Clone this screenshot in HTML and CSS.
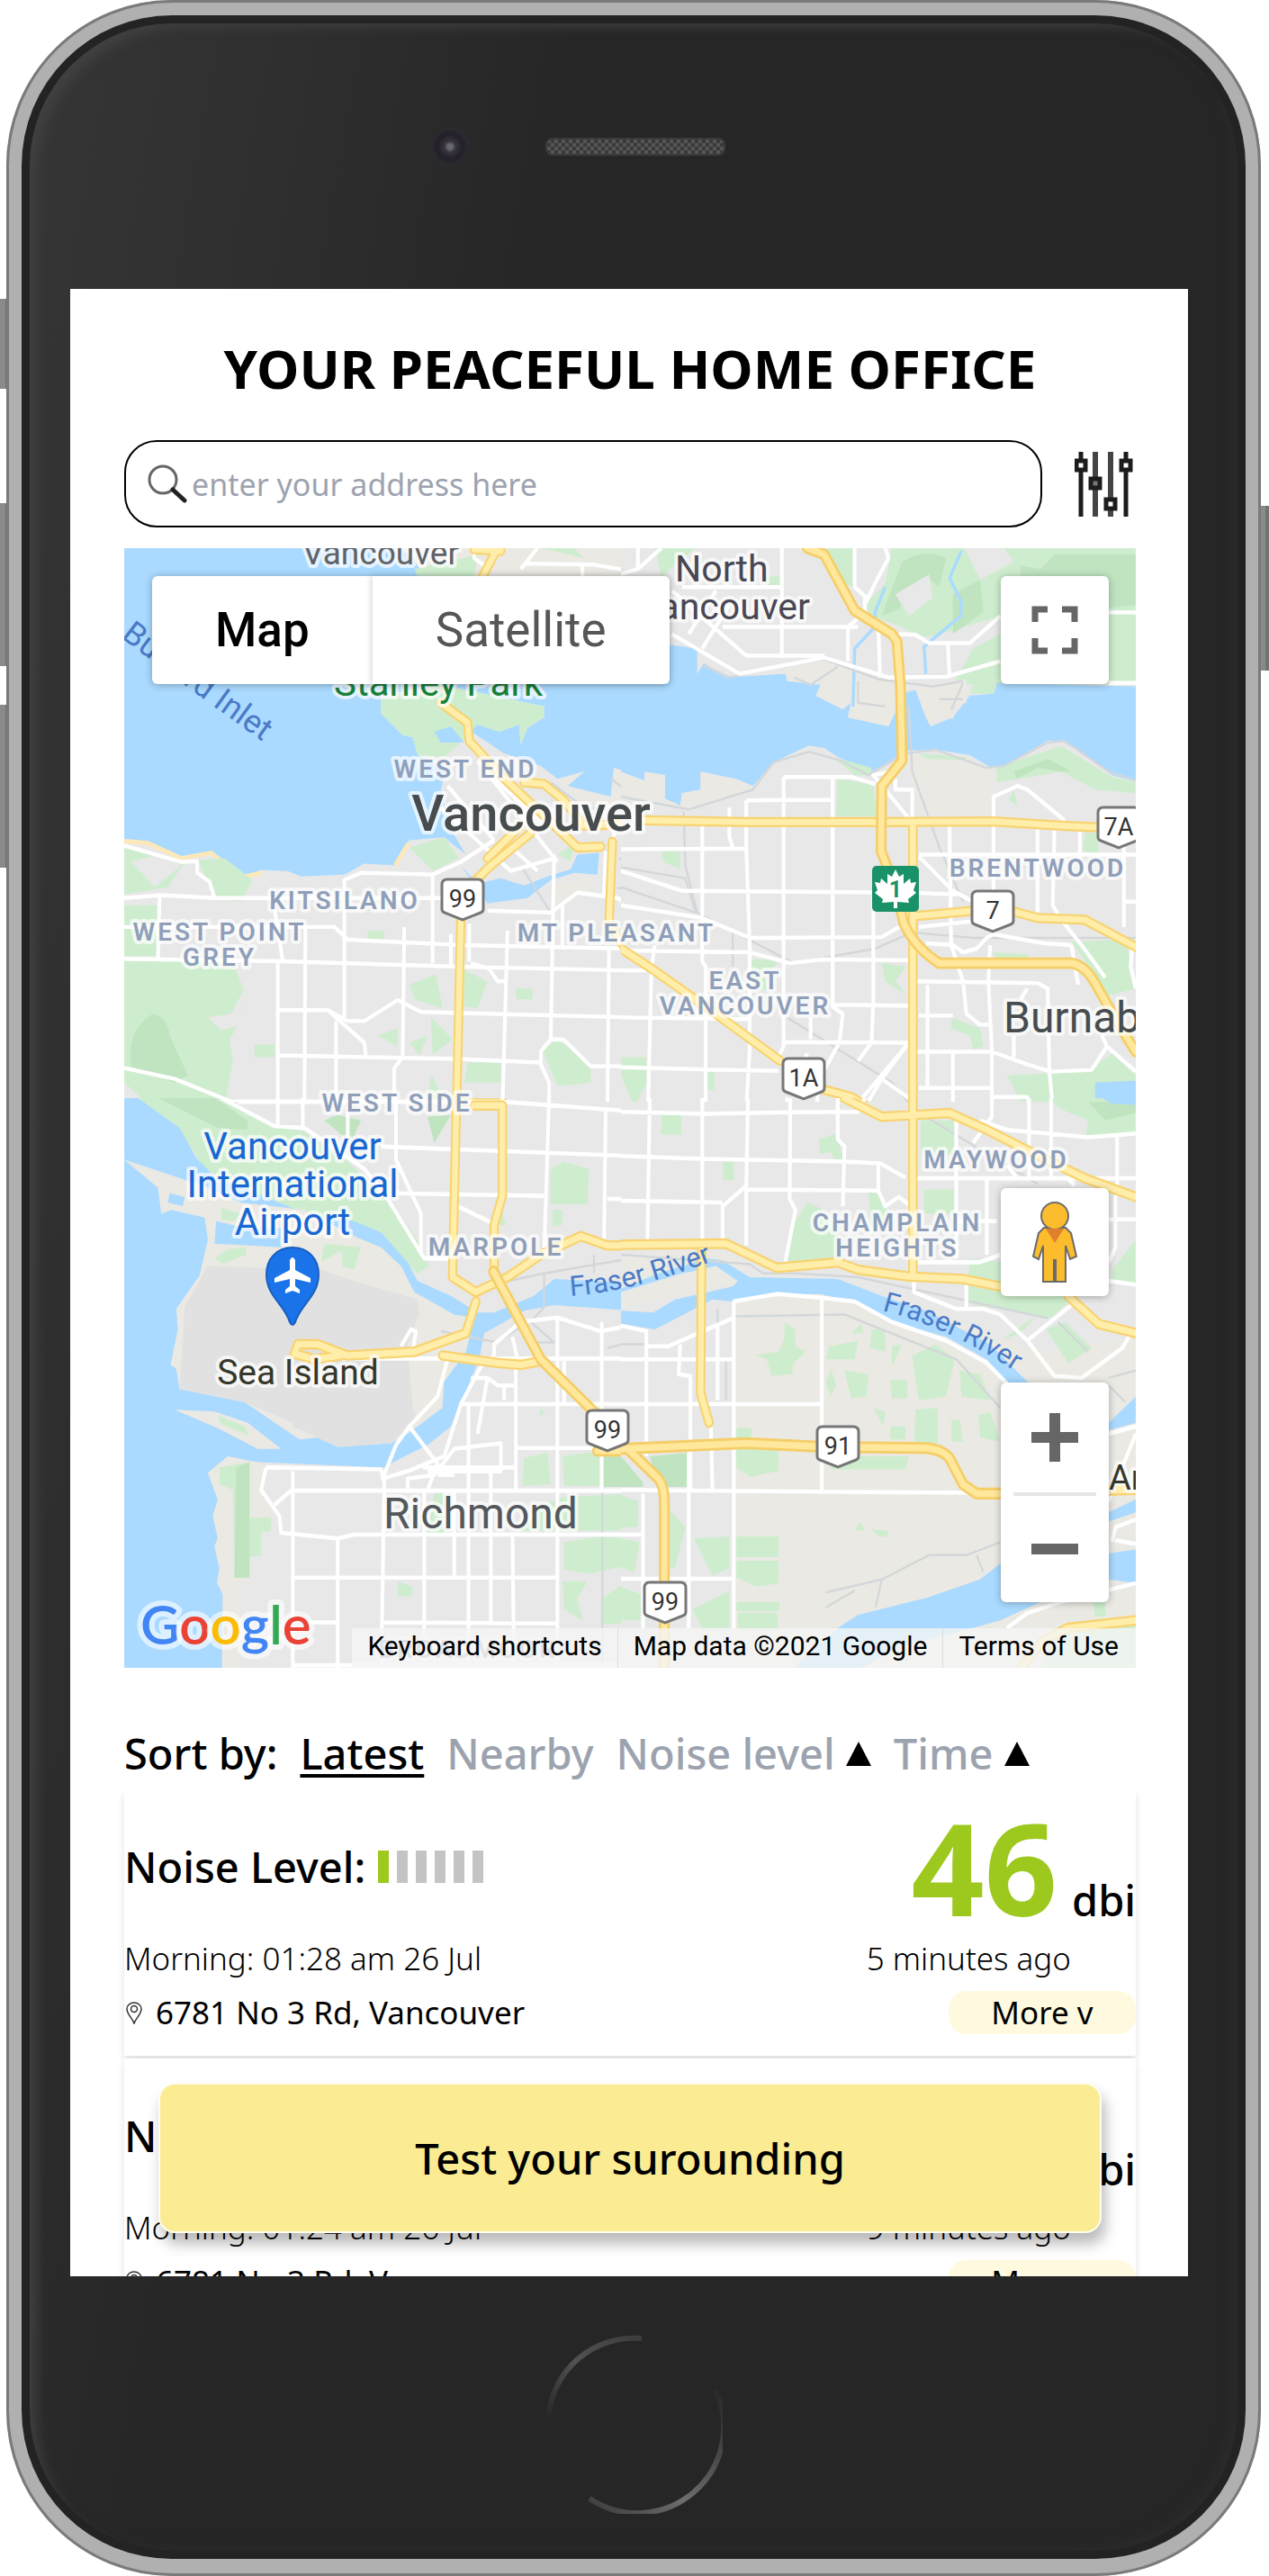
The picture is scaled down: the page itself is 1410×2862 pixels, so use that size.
FILE: index.html
```html
<!DOCTYPE html>
<html lang="en">
<head>
<meta charset="utf-8">
<meta name="viewport" content="width=device-width, initial-scale=1">
<title>Your Peaceful Home Office</title>
<link rel="stylesheet" href="styles.css">
</head>
<body>
<div class="stage">
  <i class="key key-mute"></i><i class="key key-up"></i><i class="key key-down"></i><i class="key key-power"></i>
  <div class="device">
    <div class="bezel bezel-top">
      <span class="camera"></span><span class="speaker"></span>
    </div>
    <main class="screen">
      <h1 class="title">YOUR PEACEFUL HOME OFFICE</h1>
      <form class="search">
        <label class="search-box">
          <svg class="search-icon" viewBox="0 0 44 44" aria-hidden="true"><circle cx="17" cy="17" r="15" fill="none" stroke="#666" stroke-width="3"/><path d="M28 28L41 40" stroke="#222" stroke-width="5" stroke-linecap="round"/></svg>
          <input class="search-input" type="text" placeholder="enter your address here" aria-label="Address">
        </label>
        <button class="filter" type="button" aria-label="Filters">
          <svg viewBox="0 0 66 72" width="66" height="72"><g stroke="#1c1c1c" stroke-width="5" fill="#fff"><path d="M7 0V72M57 0V72"/><path d="M23 0V72M40 0V72" stroke="#444" stroke-width="6"/><rect x="2" y="10" width="10" height="10"/><rect x="18" y="30" width="10" height="10" fill="#777"/><rect x="35" y="53" width="10" height="10"/><rect x="52" y="10" width="10" height="10"/></g></svg>
        </button>
      </form>

      <section class="map" aria-label="Map of Vancouver">
        <svg class="map-canvas" viewBox="138 609 1124 1244">
          <rect x="138" y="609" width="1124" height="1244" fill="#e8e8e8"/>
          <!-- north-west tile -->
          <svg x="120" y="600" width="580" height="630" viewBox="0 0 1568 1568" preserveAspectRatio="none">
            <path class="water" d="M0 0H1568V1000H0Z"/>
            <path class="land" d="M49 832L120 835 220 880 310 862 400 930 460 912 540 915 580 930 710 925 770 895 860 900 905 830 1010 822 1075 870 1030 800 1000 690 1015 630 930 595 915 545 885 540 820 480V430L1000 400 1310 460V490L1260 520 1240 565 1235 510 1175 530 1110 510 1075 520 1190 590 1300 625 1350 660 1430 640 1380 680 1510 710 1520 630 1568 645V1568H49Z"/>
            <path class="sand-edge" d="M49 832L120 838 220 880 310 865 400 932 460 922M862 900L903 838"/>
            <path class="park" d="M820 440L1000 400 1310 460V490L1260 520 1240 565 1235 510 1175 530 1110 510 1060 560 1010 600 930 595 915 545 885 540 820 480ZM905 850L1010 822 1055 880 975 915ZM270 885L350 880 435 940 400 1000 320 990ZM49 850L230 890 180 960 49 980ZM49 1010H150V1150H49ZM49 1165H375L410 1250V1310L365 1380 375 1440 350 1568H130L49 1500Z"/>
            <path class="park" d="M905 1230L985 1200 1005 1295 920 1270ZM1070 1190L1140 1220 1110 1295 1070 1290ZM1305 1410L1350 1380 1450 1450V1500L1350 1510ZM1225 1240H1275V1270H1225ZM970 1320L1035 1380 975 1425ZM780 1080H830V1108H780ZM810 1370L870 1350V1400ZM905 1390L960 1370 935 1425ZM1080 1445H1180V1500H1070ZM440 1395H500V1430H440ZM970 1475L1020 1568H960ZM1350 870L1400 840 1390 890Z"/>
            <path class="forest" d="M68 1400Q80 1340 135 1310 180 1320 185 1370L240 1480 200 1500 68 1455Z"/>
            <path class="gray" d="M70 890L150 870 220 900 140 960ZM300 1320L370 1310 410 1240V1340L340 1355Z"/>
            <path class="water" d="M1060 900L1110 950 1180 935 1250 955 1320 930 1390 910 1410 870 1475 865 1470 925 1400 920 1330 940 1260 990 1140 1005ZM980 530L1030 515 1070 560 1000 560Z"/>
            <path class="shore" d="M880 22H1568V100H960ZM1350 665L1430 640 1380 680 1510 710 1520 630 1568 645V740H1450ZM1350 950L1470 930 1430 980 1340 1000Z"/>
            <path class="park" d="M920 80L1020 60 1110 40 1100 100H930ZM1300 22H1400L1430 50Z"/>
            <path class="rail" d="M1330 670L1430 740 1568 750M1510 660L1568 700M1240 900L1330 1030M1535 880L1568 900M1530 960L1568 975"/>
            <path class="road" d="M49 845L220 890 268 888V920L305 945 320 990M49 990L160 982 320 990H1000M155 985L150 1160M49 1070H680L720 1105 1060 1120 1568 1130M49 1158L520 1165 1060 1180 1568 1190M710 1320V940L760 920 975 925 1060 890 1160 830M975 925V1170M890 1070L885 1430 860 1460V1568M593 1065L590 1568M510 1165V1568M500 1020L525 1165M510 1300H660L770 1390 775 1430M660 1300L720 1330H770L870 1272 940 1305 1060 1308 1568 1320M685 1330V1568M510 1425L775 1430 1050 1435 1300 1445M1200 1080L1185 1568M1340 870L1330 1380 1300 1415V1450L1325 1500V1568M1330 1380L1370 1382 1450 1455H1568M1505 1130L1500 1568M1090 1170L1145 1185 1170 1220H1190M1140 1025L1330 1030 1410 975 1530 990 1568 1010M1365 1010V1130M1030 1090V1180M1085 1060V1165M49 1460L200 1490 410 1568M350 1553H1100M1495 860L1490 980M1520 820V740M1240 80L1290 22M1250 65L1460 68 1568 85M1425 68V100M1100 22V50L1130 70"/>
            <path class="road" d="M1020 680L1160 830M1000 740L1210 915 1340 880M1110 610L1350 890M1160 660L1300 780M1200 840L1290 915"/>
            <path class="hwy-edge" d="M1000 450L1080 505 1085 555 1180 650 1410 850 1480 848M1250 670L1310 675 1370 720 1430 790 1568 785M1270 810L1150 900 1100 945M1240 790L1140 880M1515 835L1505 1060 1568 1150M1060 1040L1047 1568M1047 1558H1190M1160 40L1120 110M1100 26L1180 30"/>
            <path class="hwy" d="M1000 450L1080 505 1085 555 1180 650 1410 850 1480 848M1250 670L1310 675 1370 720 1430 790 1568 785M1270 810L1150 900 1100 945M1240 790L1140 880M1515 835L1505 1060 1568 1150M1060 1040L1047 1568M1047 1558H1190M1160 40L1120 110M1100 26L1180 30"/>
          </svg>
          <!-- north-east tile -->
          <svg x="690" y="600" width="590" height="630" viewBox="0 0 1568 1568" preserveAspectRatio="none">
            <path class="gray" d="M0 0H1568V1568H0Z"/>
            <path class="park" d="M800 22H1568V400H980L1040 300 1120 260 1120 210 940 260 880 270 830 240 740 210 720 180 780 120ZM610 22H690V130L620 110ZM100 22H220L120 100ZM430 100H475V135H420Z"/>
            <path class="forest" d="M830 60Q900 20 960 50L940 130 900 100 820 190 770 210ZM980 150L1060 110 1070 200 980 260ZM1180 70L1240 80 1280 40H1520V180L1420 190 1370 150 1180 190Z"/>
            <path class="gray" d="M1015 22H1130L1160 60 1060 110ZM810 150L910 95 920 160 850 210Z"/>
            <path class="water" d="M0 250L146 290 225 300V370L245 340 310 380 480 370 590 400 575 430 655 468 680 450 670 490 790 515 800 480 845 420 870 415 900 490 915 515 980 490 1030 430 1100 425 1110 395 1520 405V668L1450 650 1380 600 1300 555H1260L1130 625 1090 628 1030 595 930 580 850 582 740 640 640 600 600 575 555 568 450 615 390 680 340 660 235 640V690L180 700 175 735 130 715V650L70 640V665L0 640Z"/>
            <path class="shore" d="M485 355L600 335 680 360 700 390 655 468 575 430 590 400 490 390ZM870 400L1020 385V450L980 460V495L940 480 915 515 900 490ZM690 400L780 380 830 440 790 515 670 490ZM850 590L1020 600 1100 640 1100 760H870ZM0 645L70 665V640L130 650V715L175 735 180 700 235 690V640L390 680 340 715 180 745 0 700Z"/>
            <path class="park" d="M640 660L745 675 755 765 635 765ZM625 600L740 630 735 650 690 650ZM1110 630L1200 600 1300 570 1450 655 1520 670V700L1400 690 1300 640 1110 670ZM1045 390L1110 395 1100 425H1030ZM120 860H175V910L125 890ZM380 1160H460V1175L420 1200 440 1250 390 1230ZM770 1170L840 1180 810 1220 845 1260 780 1220ZM1330 1110L1490 1105 1520 1240 1440 1260 1390 1190ZM880 590L1020 600V610L900 605ZM1370 810H1410V870L1365 860ZM975 1320L1060 1350 1070 1400 1040 1410 1030 1370 975 1350ZM1140 1480L1260 1475 1380 1470 1450 1420 1520 1480V1568H1190ZM250 1465H275V1520H250ZM0 1430H75V1500L40 1568 0 1480ZM1095 1140L1200 1145V1155H1110ZM1160 690L1170 735 1145 720Z"/>
            <path class="forest" d="M1160 640L1260 605 1330 640 1300 640 1230 630 1170 660Z"/>
            <path class="water" d="M1400 1500L1520 1495V1545L1470 1555 1400 1548Z"/>
            <path class="stream" d="M1005 30L970 105 1005 170 1003 210 920 275 895 295 900 370M780 130L750 200V240L690 300 685 460"/>
            <path class="rail" d="M240 345L320 380 520 340 600 330 760 385 920 405 1010 390M510 380L560 400 640 350M850 460L860 640 940 850 1010 1000M450 615L390 690 200 745 0 710M450 615L555 585 650 610 730 650 840 590 930 580 1080 630 1130 625 1260 560 1310 555 1440 640 1520 665M0 905L190 935 220 1030 0 960M185 750L190 900 225 1030 510 1170 750 1130 860 1085 1040 1100H1520M330 1080V1180M490 1320L800 1500 860 1568M700 390V450L780 460M940 440L1010 440M975 470L1010 395"/>
            <path class="road" d="M0 95L50 80 120 22M50 80V22M475 22V320M180 130H475M150 260L350 370 600 325 790 380 960 378 1120 335M370 320L150 140M300 240H700M370 320H600M200 260L280 140M240 300L320 180M690 22V130L720 155V200L670 240V335M720 180L750 120 790 50 780 22M760 240L765 380M820 260L870 262 910 285 1030 285 1120 210M965 285L970 375M1440 200H1520M1440 395H1520M0 855L370 853M370 720V853L380 1120V1410L370 1568M240 780V1165L250 1180V1568M480 655V1400L465 1430M480 655L680 655 750 675M625 655V1290L655 1310 645 1390 580 1500V1568M370 720L620 718M320 740V820L330 850M0 915L180 970 860 975 990 980M0 1010L70 1020 240 1045 380 1100 770 1098 830 1065M0 1135L380 1140 500 1170 590 1160 860 1162M745 980V1280L740 1390 700 1440M630 1285L860 1288M480 1388L850 1390 770 1490 720 1568M0 1320L380 1325M0 1458L300 1465 465 1468M90 1180L80 1568M100 1120L90 1180M0 1190H90M770 1490L860 1550M850 1390L690 1568M550 1420L530 1460M560 1320V1380M810 660V690H860V770M1100 780V710L1170 680 1200 690 1310 775M1100 710V1040M970 790L975 1120M1230 800V1030M1280 800L1275 1010 1300 1050M1355 800V880M880 870H1520M880 875L980 970 1060 1010M880 1070L1080 1050M870 1220L1230 1225 1260 1240 1265 1470 1275 1568M975 1120L1010 1220 1020 1310 1060 1340H1090M900 1115L980 1120 1010 1140 1050 1130 1080 1100 1100 1090 1250 1115 1330 1120M1090 1120L1085 1220 1095 1410V1568M870 1415L1095 1415 1200 1450 1270 1470 1390 1465 1435 1400 1420 1370M1435 1400L1520 1470M905 1230V1510M880 1315H980M880 1515H1090M1095 1540H1200L1205 1568M980 1420V1568M1485 830V1070M1490 1000H1520M1300 1050L1360 1120 1430 1210M1330 1120L1350 1230M1510 1120L1505 1180 1520 1240M1200 1240L1180 1270M1160 1370V1430M490 1540V1568M850 770L745 650 800 640"/>
            <path class="hwy-edge" d="M60 775L380 780 760 780 1100 778 1300 790 1420 795M0 1130L90 1185 280 1310 470 1440M600 1520L680 1540 730 1568M862 780V1568M865 1040L1040 1025M1150 1025L1230 1045 1370 1050 1520 1125"/>
            <path class="hwy" d="M60 775L380 780 760 780 1100 778 1300 790 1420 795M0 1130L90 1185 280 1310 470 1440M600 1520L680 1540 730 1568M862 780V1568M865 1040L1040 1025M1150 1025L1230 1045 1370 1050 1520 1125"/>
            <path class="fwy-edge" d="M550 22L600 40 690 195 800 260 815 280 825 400 830 610 770 680 768 860 810 960 835 1060Q870 1130 940 1170L1330 1170Q1370 1175 1400 1225L1470 1340 1520 1415"/>
            <path class="fwy" d="M550 22L600 40 690 195 800 260 815 280 825 400 830 610 770 680 768 860 810 960 835 1060Q870 1130 940 1170L1330 1170Q1370 1175 1400 1225L1470 1340 1520 1415"/>
          </svg>
          <!-- south-west tile -->
          <svg x="120" y="1220" width="580" height="650" viewBox="0 0 1568 1568" preserveAspectRatio="none">
            <path class="gray" d="M0 10H1568V1568H0Z"/>
            <path class="park" d="M70 0H330L480 70 590 90 720 170 840 270 930 380 965 450 930 470 820 380 700 330 480 280 310 215 210 80Z"/>
            <path class="forest" d="M150 0H320L420 60 420 85 330 80ZM650 60L690 45 760 60 730 120ZM960 50L1030 45 980 120Z"/>
            <path class="water" d="M49 0H90L215 80 265 160 320 210 470 265 600 310 740 330 820 360 900 440 930 490 1030 530 1110 575H1160L1280 530 1340 485 1568 495V570L1500 565 1340 555 1250 570 1130 630 1115 700 1060 820 1030 880 960 930 880 965 830 990 440 975 360 960 300 1005 330 1075 315 1120 330 1180 320 1200 335 1260 328 1300 345 1330 342 1568H49Z"/>
            <path class="shore" d="M49 165L150 195 300 240 400 280 590 300 740 370 820 400 880 450 920 520 1040 580 1100 590 1075 680 1010 760 1005 830 900 900 850 925 690 935 630 910 575 915 410 815 215 780 205 725 188 715 210 620 205 565 275 475 300 380 290 320 190 300 160 310 150 240ZM200 835L320 840 420 870 520 940 450 940 330 885ZM360 960L470 980 455 1050 500 1090 400 1300 395 1568H342L345 1330 328 1300 335 1260 320 1200 330 1180 315 1120 330 1075 300 1005Z"/>
            <path class="water" d="M185 255L230 265 225 290 180 280ZM325 330L400 345 520 350 520 400 320 390ZM49 345L160 310 150 330 49 350Z"/>
            <path class="island" d="M300 450L640 460 740 490 930 540 935 580 900 660 915 830 930 860 850 925 690 935 630 910 555 880 555 870 410 815 215 780 230 560Z"/>
            <path class="park" d="M340 295L400 310 380 330 340 325ZM320 430L360 405 415 400 415 420 345 445ZM650 390L760 400 740 460 705 450 700 410 640 440ZM330 850L410 880 425 905 340 875ZM335 990L425 975V1125H490V1160L460 1165V1225L425 1230V1285H380L375 1050 335 1035ZM1330 190L1370 170 1445 190 1440 285H1330ZM1335 300H1365V340L1335 345ZM1250 965L1320 950 1330 1035 1245 1040ZM1365 960L1480 945V1040H1370ZM1365 1070L1568 1060V1160H1240L1290 1100ZM1370 1190L1480 1175 1568 1180V1250L1450 1275 1370 1265ZM1365 1295H1440L1410 1340 1425 1400 1370 1370ZM870 1295L915 1310V1335H870ZM1485 1340L1568 1290V1410H1480ZM980 1060H1010V1165H960ZM1180 295L1195 340H1170ZM1300 830L1315 850H1295Z"/>
            <path class="forest" d="M1485 950H1568V1042H1485ZM385 990L425 975V1285H380Z"/>
            <path class="rail" d="M1100 510L1310 470 1568 430M1310 470V560L1270 600 1340 655H1270M1000 625L1170 655 1260 600M1460 420V470M1485 1040V1568M1500 670L1568 655"/>
            <path class="road" d="M340 0L500 75 590 80 640 110 770 190 840 270 950 430H1040M390 10H1190L1568 35M510 0V75M585 0V80M720 40V110M865 0V165L940 310V420M820 130L1568 155M860 255L1310 262M1050 290L1155 335M1325 0L1310 420M1495 30L1490 385M1500 270H1568M1185 0V40M475 990L820 995 830 1030 820 1568M475 990L460 1050 515 1120 520 1165 690 1180 740 1170H1568M500 1090L550 1052H1568M555 1000V1568M690 1180V1568M555 1285H1350M555 1520H1568M820 1405L1350 1408M590 1405H690M950 1050L950 1568M1040 1050V1285M1083 820V1568M1150 1000V1408M1215 1170L1220 1568M1350 590V1568M1225 700V1050M1483 600V1050M1225 938H1568M1060 820H1568M700 698H1568M880 665L910 620 925 625 915 680M1020 700L990 800 905 880 865 930 825 1020 900 1000 1010 960 1060 820 1120 720 1160 690M905 880L990 980 960 1050M900 1050V1020L980 1010 1040 940 1180 925V1000H960M1160 690V660L1240 600 1350 588 1480 625 1568 610M1215 640L1230 700M1090 750H1140L1170 770H1220M1190 770V810M1140 750L1110 900M1370 705V820M945 990H1225M990 1010H1040"/>
            <path class="hwy-edge" d="M1047 0L1035 480 1105 520 1200 480 1300 420 1420 370 1500 395H1568M1100 20H1185V260L1160 340V470M1105 545L1075 630 920 680 720 690 630 660H570L560 685 620 700 700 690M1005 690L1170 710 1240 715 1300 705"/>
            <path class="hwy" d="M1047 0L1035 480 1105 520 1200 480 1300 420 1420 370 1500 395H1568M1100 20H1185V260L1160 340V470M1105 545L1075 630 920 680 720 690 630 660H570L560 685 620 700 700 690M1005 690L1170 710 1240 715 1300 705"/>
            <path class="fwy-edge" d="M1158 465L1300 700 1470 850M1470 945H1568"/>
            <path class="fwy" d="M1158 465L1300 700 1470 850M1470 945H1568"/>
          </svg>
          <!-- south-east tile -->
          <svg x="690" y="1220" width="590" height="650" viewBox="0 0 1568 1568" preserveAspectRatio="none">
            <path class="gray" d="M0 10H1568V1568H0Z"/>
            <path class="shore" d="M335 540L600 500 900 560 1140 650 1230 680 1568 640V1568H335ZM0 430L240 400 380 440 340 500 0 560Z"/>
            <path class="park" d="M550 280L600 300 660 400 640 430 490 440 500 350ZM730 250L765 260 790 310 740 370ZM885 60H985V150H885ZM895 245H985V310H895ZM120 45H178V98H118ZM300 170H333V220H302ZM585 110L635 95 660 170 640 180 620 145 585 150ZM1260 0H1520V100L1370 110 1380 60 1300 30ZM1030 430L1130 440V500L1340 530 1270 590 1020 550ZM1450 460L1520 380V500H1450Z"/>
            <path class="park" d="M485 600L515 620V665L545 680 510 710 505 740 445 745 430 700 395 688 465 680 480 650ZM605 700L615 665 700 650 690 700ZM740 620H780V680L735 670ZM680 630L710 605 715 630ZM800 665L830 660 800 720ZM860 690L930 660 985 700 960 800 880 810 870 760ZM605 765L620 725 635 770 620 800ZM660 730L730 740 725 800 680 805ZM795 755H845V805H800ZM1000 730L1060 740 1090 810 1005 800ZM745 830L780 840 775 880ZM870 835L935 830V925L865 920ZM975 865L1000 860 1010 920H975ZM1055 850L1090 840 1120 920 1060 910ZM795 880H840V915H795ZM1255 620L1310 600 1390 670 1320 710ZM340 885H385V935H465V1000L380 1015 340 990ZM620 960H850L840 995H620ZM340 1175H465V1230H340ZM340 1240H465V1300L400 1310 340 1285ZM340 1350H468V1375H340ZM345 1380H460L465 1420H345ZM215 1180L320 1175V1260L270 1280ZM210 1370L320 1320V1420H240ZM0 1065L50 1080V1150H0ZM0 1180L55 1190 40 1270 0 1260ZM120 1080L190 1150 160 1260 115 1250ZM0 1310L60 1330V1400H0ZM690 1160L705 1135 720 1158ZM740 1155L788 1160V1175H760ZM1120 650L1230 580 1180 630Z"/>
            <path class="forest" d="M85 960L200 950V1042H110ZM0 960L65 1030V1042H0ZM1380 10H1520V40L1430 60Z"/>
            <path class="water" d="M0 510L110 470 255 430 300 435 380 480 640 485 770 530 900 570 1090 660 1205 765H1145L1080 700 960 640 800 600 680 545 590 525H460L330 545 270 540 100 620 0 605V570L95 575 160 540 330 505 345 490 280 450 180 470 0 520ZM500 1537L640 1420 700 1385 900 1340 1060 1290 1130 1240 1440 1220 1520 1210V1300L1440 1290 1240 1350 1120 1400 1000 1430 820 1470 690 1537ZM1440 870L1520 800V870L1440 890ZM1440 1110L1520 1075V1110L1440 1135ZM1420 0H1520V18L1450 15Z"/>
            <path class="park" d="M1240 1530L1300 1440 1520 1400V1530ZM1395 1350L1430 1330V1390H1400Z"/>
            <path class="rail" d="M0 420L380 445 420 470 520 470 700 480 1260 590M335 585L660 580 990 700 1120 830M0 660H80M285 565V810M310 700V810M605 1325L770 1290 910 1225 1020 1225 1120 1190M770 1290L752 1365M605 1365L690 1320M1050 1225L1070 1270M900 50L1230 230M1290 600L1380 680M1440 750L1520 730M1440 770L1490 815"/>
            <path class="road" d="M0 37L245 42 500 38 700 37 720 0M85 0L78 385M240 0V385M375 0L370 235 300 290V385M0 155L240 163 655 170 765 175 840 213M500 0L498 270 515 300 485 440M0 275L300 280M370 245L760 248 780 290 820 265 850 285M370 245V395M760 175V245M640 0V110L660 130 655 290M990 60V430M870 215H1520M1080 215V420M990 330H1110M1205 0V215M1270 0V215M1095 0V50L1040 120M1060 60L1140 85 1380 105 1520 95M1465 95V250M1140 180L1170 215M870 440H1060L1120 420M865 480V520L990 565H1070L1120 580 1200 650 1350 540M1020 500V565M1200 650L1280 745 1360 750 1480 670 1500 640M1440 490L1520 500M1460 260V400L1440 440M330 545L460 525 590 535 690 545 800 600 960 650 1080 710 1140 765M593 535V1050M333 545V1420M0 820H590M0 700H330M75 620V960M0 610L75 625M80 665H140L330 590M175 660L170 740 205 745V1050M285 610V810M265 870L270 1050M200 950V1420M0 1050L590 1055 1050 1058M0 1170H65M0 1288H330M65 1420V1060M1440 900L1520 880M1520 900L1440 1080M1450 1190L1460 1150 1520 1130M1520 1195L1460 1185M1140 1420L1200 1380 1300 1350 1520 1300M1320 215L1340 235M1440 325H1520"/>
            <path class="hwy-edge" d="M0 393L310 390 460 455 640 440 700 460 850 478 1010 485 1120 505M1320 530L1410 605 1520 630M862 0V475M660 0L770 50 970 40 1080 85 1200 140 1370 215 1520 265M238 410L235 790 260 870M1120 1060L1520 1050M1180 1530L1240 1460 1320 1420 1520 1400"/>
            <path class="hwy" d="M0 393L310 390 460 455 640 440 700 460 850 478 1010 485 1120 505M1320 530L1410 605 1520 630M862 0V475M660 0L770 50 970 40 1080 85 1200 140 1370 215 1520 265M238 410L235 790 260 870M1120 1060L1520 1050M1180 1530L1240 1460 1320 1420 1520 1400"/>
            <path class="fwy-edge" d="M0 940L370 925 600 935 900 938Q950 942 970 965L1010 1035 1050 1060H1140M20 940L110 1020Q128 1040 128 1080V1568"/>
            <path class="fwy" d="M0 940L370 925 600 935 900 938Q950 942 970 965L1010 1035 1050 1060H1140M20 940L110 1020Q128 1040 128 1080V1568"/>
          </svg>

          <defs>
            <path id="river-west" d="M634 1440Q700 1436 800 1398"/>
            <path id="river-east" d="M980 1456Q1060 1476 1140 1532"/>
            <path id="inlet" d="M134 708Q218 772 340 858"/>
            <path id="shield" d="M-17-20H17Q23-20 23-14V13Q23 16 20 17L0 25-20 17Q-23 16-23 13V-14Q-23-20-17-20Z"/>
          </defs>
          <g class="halo area" text-anchor="middle">
            <text x="517" y="864">WEST END</text>
            <text x="383" y="1010">KITSILANO</text>
            <text x="244" y="1045">WEST POINT</text><text x="244" y="1073">GREY</text>
            <text x="685" y="1046">MT PLEASANT</text>
            <text x="828" y="1099">EAST</text><text x="828" y="1127">VANCOUVER</text>
            <text x="1153" y="974">BRENTWOOD</text>
            <text x="441" y="1235">WEST SIDE</text>
            <text x="1107" y="1298">MAYWOOD</text>
            <text x="551" y="1395">MARPOLE</text>
            <text x="997" y="1368">CHAMPLAIN</text><text x="997" y="1396">HEIGHTS</text>
            <text x="520" y="1842">BROADMOOR</text>
          </g>
          <g class="halo place">
            <text x="336" y="627" font-size="37" fill="#5f6368">Vancouver</text>
            <text x="750" y="646" font-size="41" fill="#4a4754">North</text>
            <text x="900" y="688" font-size="41" fill="#4a4754" text-anchor="end">Vancouver</text>
            <text x="590" y="923" font-size="56" font-weight="500" fill="#474c4f" text-anchor="middle">Vancouver</text>
            <text x="1115" y="1147" font-size="48" fill="#474c4f">Burnaby</text>
            <text x="426" y="1698" font-size="48" fill="#54585c">Richmond</text>
            <text x="1232" y="1655" font-size="38" fill="#35372a">Annacis Island</text>
            <text x="331" y="1538" font-size="39" fill="#35372a" text-anchor="middle">Sea Island</text>
            <text x="487" y="773" font-size="42" fill="#188038" text-anchor="middle">Stanley Park</text>
            <g fill="#1967d2" font-size="42" text-anchor="middle"><text x="325" y="1288">Vancouver</text><text x="325" y="1330">International</text><text x="325" y="1372">Airport</text></g>
          </g>
          <g class="river">
            <text><textPath href="#inlet">Burrard Inlet</textPath></text>
            <text font-size="31"><textPath href="#river-west">Fraser River</textPath></text>
            <text font-size="31"><textPath href="#river-east">Fraser River</textPath></text>
          </g>
          <g class="shields">
            <g transform="translate(514 997)"><use href="#shield"/><text y="11">99</text></g>
            <g transform="translate(1243 917)"><use href="#shield"/><text y="11">7A</text></g>
            <g transform="translate(1103 1010)"><use href="#shield"/><text y="11">7</text></g>
            <g transform="translate(893 1196)"><use href="#shield"/><text y="11">1A</text></g>
            <g transform="translate(675 1587)"><use href="#shield"/><text y="11">99</text></g>
            <g transform="translate(931 1605)"><use href="#shield"/><text y="11">91</text></g>
            <g transform="translate(739 1778)"><use href="#shield"/><text y="11">99</text></g>
          </g>
          <g transform="translate(995 988)">
            <rect x="-26" y="-26" width="52" height="51" rx="5" fill="#1a9267"/>
            <path fill="#fff" d="M0-22L4-14 9-17 9-6 16-12 17-7 23-8 20 1 23 4 14 11 15 15 2 14 2 21H-2V14L-15 15-14 11-23 4-20 1-23-8-17-7-16-12-9-6-9-17-4-14Z"/>
            <text x="0" y="9" font-size="25" font-weight="700" fill="#1a9267" text-anchor="middle">1</text>
          </g>
          <g transform="translate(325 1417)">
            <path d="M0-31C-18-31-29-18-29-1-29 23-9 32-3 52Q0 58 3 52C9 32 29 23 29-1 29-18 18-31 0-31Z" fill="#1a73e8" stroke="#1a5fc0" stroke-width="2"/>
            <path fill="#fff" d="M-3-17Q0-23 3-17V-6L20 3V8L3 4V12L8 16V20L0 17-8 20V16L-3 12V4L-20 8V3L-3-6Z"/>
          </g>
          <text class="logo" x="156" y="1827"><tspan fill="#4285f4">G</tspan><tspan fill="#ea4335">o</tspan><tspan fill="#fbbc05">o</tspan><tspan fill="#4285f4">g</tspan><tspan fill="#34a853">l</tspan><tspan fill="#ea4335">e</tspan></text>
        </svg>
        <div class="map-top">
          <div class="map-types"><button type="button" class="map-type map-type-on">Map</button><button type="button" class="map-type">Satellite</button></div>
          <button type="button" class="control" aria-label="Full screen"><svg width="52" height="54" viewBox="0 0 52 54"><path fill="none" stroke="#666" stroke-width="7" d="M4 18V4H18M34 4H48V18M48 36V50H34M18 50H4V36"/></svg></button>
        </div>
        <div class="map-side">
          <button type="button" class="control" aria-label="Street view"><svg width="52" height="92" viewBox="0 0 52 92"><g fill="#fbbc2d" stroke="#6b6b6b" stroke-width="2"><path d="M14 30H38L44 36 50 62 43 65 38 50V90H27V66H25V90H13V50L8 65 2 62 8 36Z"/><circle cx="26" cy="17" r="15"/></g><path fill="#e0802c" d="M16 31H36L26 47Z"/></svg></button>
          <div class="zoom">
            <button type="button" class="zoom-button" aria-label="Zoom in"><svg width="52" height="54" viewBox="0 0 52 54"><path fill="#666" d="M20 0H32V21H52V33H32V54H20V33H0V21H20Z"/></svg></button>
            <button type="button" class="zoom-button" aria-label="Zoom out"><svg width="52" height="12" viewBox="0 0 52 12"><path fill="#666" d="M0 0H52V12H0Z"/></svg></button>
          </div>
        </div>
        <div class="legal"><button type="button" class="legal-item">Keyboard shortcuts</button><span class="legal-item">Map data ©2021 Google</span><a class="legal-item" href="#terms">Terms of Use</a></div>
      </section>

      <nav class="sort" aria-label="Sort">
        <span>Sort by:</span>
        <button type="button" class="sort-option sort-on">Latest</button>
        <button type="button" class="sort-option">Nearby</button>
        <button type="button" class="sort-option">Noise level <svg class="arrow" viewBox="0 0 28 27"><path d="M14 0L28 27H0Z"/></svg></button>
        <button type="button" class="sort-option">Time <svg class="arrow" viewBox="0 0 28 27"><path d="M14 0L28 27H0Z"/></svg></button>
      </nav>

      <article class="card">
        <div class="card-head">
          <h2 class="level">Noise Level:<span class="bars"><i class="bar bar-on"></i><i class="bar"></i><i class="bar"></i><i class="bar"></i><i class="bar"></i><i class="bar"></i></span></h2>
          <p class="reading"><strong>46</strong> dbi</p>
        </div>
        <div class="card-time"><span>Morning: 01:28 am 26 Jul</span><span>5 minutes ago</span></div>
        <div class="card-place">
          <span class="address"><svg class="pin" viewBox="0 0 18 25"><path fill="none" stroke="#333" stroke-width="1.5" d="M9 24C7 18 1 14 1 8A8 7 0 0 1 17 8C17 14 11 18 9 24Z"/><circle cx="9" cy="8" r="3.5" fill="none" stroke="#333" stroke-width="1.5"/></svg>6781 No 3 Rd, Vancouver</span>
          <button type="button" class="more">More v</button>
        </div>
      </article>
      <article class="card">
        <div class="card-head">
          <h2 class="level">Noise Level:<span class="bars"><i class="bar bar-on"></i><i class="bar"></i><i class="bar"></i><i class="bar"></i><i class="bar"></i><i class="bar"></i></span></h2>
          <p class="reading"><strong>46</strong> dbi</p>
        </div>
        <div class="card-time"><span>Morning: 01:24 am 26 Jul</span><span>9 minutes ago</span></div>
        <div class="card-place">
          <span class="address"><svg class="pin" viewBox="0 0 18 25"><path fill="none" stroke="#333" stroke-width="1.5" d="M9 24C7 18 1 14 1 8A8 7 0 0 1 17 8C17 14 11 18 9 24Z"/><circle cx="9" cy="8" r="3.5" fill="none" stroke="#333" stroke-width="1.5"/></svg>6781 No 3 Rd, Vancouver</span>
          <button type="button" class="more">More v</button>
        </div>
      </article>
      <button type="button" class="cta">Test your surounding</button>
    </main>
    <div class="bezel bezel-bottom">
      <svg class="home" viewBox="0 0 200 200" aria-hidden="true">
        <defs>
          <linearGradient id="ring-a" x1="1" y1="0" x2="0" y2="1"><stop offset="0" stop-color="#3c3c3c"/><stop offset=".5" stop-color="#525252"/><stop offset="1" stop-color="#262626"/></linearGradient>
          <linearGradient id="ring-b" x1="1" y1="0" x2="0" y2="1"><stop offset="0" stop-color="#262626"/><stop offset=".6" stop-color="#6e6e6e"/><stop offset="1" stop-color="#3a3a3a"/></linearGradient>
        </defs>
        <path fill="none" stroke="url(#ring-a)" stroke-width="6" d="M110 5A96 96 0 0 0 6 95"/>
        <path fill="none" stroke="url(#ring-b)" stroke-width="6" d="M192 62A96 96 0 0 1 52 183"/>
      </svg>
    </div>
  </div>
</div>
</body>
</html>
```
FILE: styles.css
```css
* { box-sizing: border-box; }
body { margin: 0; background: #fff; color: #000; font-family: "Noto Sans", "Open Sans", sans-serif; }
button, input { font: inherit; color: inherit; }
button { border: 0; padding: 0; background: none; cursor: pointer; }
h1, h2, p { margin: 0; }

.stage { position: relative; height: 100vh; padding: 0 9px 0 7px; }
.key { position: absolute; width: 10px; background: #8a8a8a; border-right: 4px solid #737373; }
.key-mute { left: 0; top: 332px; height: 100px; }
.key-up { left: 0; top: 559px; height: 181px; }
.key-down { left: 0; top: 783px; height: 181px; }
.key-power { right: 0; top: 562px; height: 183px; }

.device {
  position: relative; height: 100%; display: flex; flex-direction: column; padding: 0 64px 0 54px;
  border: 17px solid #b0b0b0; border-bottom-width: 19px; border-radius: 184px;
  background: linear-gradient(100deg, #363636 0, #303030 14%, #262626 34%);
  box-shadow: inset 0 0 0 9px #232323, inset 16px 12px 14px #414141, inset -12px -9px 16px #2c2c2c;
}
.device::before { content: ""; position: absolute; inset: -17px -17px -19px; border: 3px solid #7a7a7a; border-radius: 184px; pointer-events: none; }
.bezel { position: relative; flex: none; }
.bezel-top { height: 304px; display: flex; justify-content: center; padding-top: 136px; }
.camera { position: absolute; left: 400px; top: 124px; width: 44px; height: 44px; border-radius: 50%; background: radial-gradient(circle, #66666e 0 3px, #38353f 6px, #221f28 14px, #2c2a30 20px, transparent 22px); }
.speaker { width: 200px; height: 20px; margin-left: 13px; border-radius: 8px; background: repeating-conic-gradient(#3a3a3a 0 25%, #555 0 50%) 0 0 / 8px 8px; border: 2px solid #3b3b3b; }
.bezel-bottom { height: 314px; display: flex; justify-content: center; align-items: flex-start; padding-top: 64px; }
.home { width: 200px; height: 200px; margin-left: 8px; }

.screen { position: relative; flex: 1; min-height: 0; overflow: hidden; padding: 51px 58px 0 60px; background: #fff; }
.title { font-size: 60px; line-height: 74px; font-weight: 700; text-align: center; white-space: nowrap; }
.search { display: flex; align-items: center; justify-content: space-between; gap: 34px; margin: 43px 0 23px; }
.search-box { flex: 1; display: flex; align-items: center; gap: 5px; height: 97px; padding: 0 24px; border: 2px solid #000; border-radius: 36px; }
.search-icon { flex: none; width: 44px; height: 44px; }
.search-input { flex: 1; min-width: 0; border: 0; padding: 0; outline: 0; background: none; font-size: 34px; line-height: 48px; }
.search-input::placeholder { color: #9ca3af; opacity: 1; }
.filter { flex: none; width: 70px; height: 72px; line-height: 0; }

.map { position: relative; font-family: Roboto, sans-serif; }
.map-canvas { display: block; width: 100%; height: auto; overflow: hidden; }
.water { fill: #aadaff; }
.land, .gray { fill: #e8e8e8; }
.shore { fill: #ebe9e3; }
.island { fill: #e1e1e1; }
.park { fill: #ceedce; }
.forest { fill: #c0e4c0; }
.sand-edge, .road, .rail, .stream, .hwy, .hwy-edge, .fwy, .fwy-edge { fill: none; stroke-linejoin: round; }
.sand-edge { stroke: #fde9b8; stroke-width: 12; }
.road { stroke: #fff; stroke-width: 11; }
.rail { stroke: #d3d7da; stroke-width: 6; }
.stream { stroke: #aadaff; stroke-width: 9; }
.hwy-edge { stroke: #f8d370; stroke-width: 28; stroke-linecap: round; }
.hwy { stroke: #ffeeaa; stroke-width: 17; stroke-linecap: round; }
.fwy-edge { stroke: #f5ce68; stroke-width: 32; stroke-linecap: round; }
.fwy { stroke: #ffe79c; stroke-width: 18; stroke-linecap: round; }
.halo { paint-order: stroke; stroke: #fff; stroke-opacity: .7; stroke-width: 8px; stroke-linejoin: round; }
.area { font-size: 28px; font-weight: 600; letter-spacing: 3px; fill: #8f9fba; }
.river { font-size: 36px; fill: #4a7ac7; }
.shields use { fill: #fff; stroke: #777; stroke-width: 3; }
.shields text { font-size: 27px; text-anchor: middle; fill: #333; }
.logo { font-family: Lato, sans-serif; font-size: 60px; font-weight: 600; paint-order: stroke; stroke: #fff; stroke-opacity: .6; stroke-width: 12px; stroke-linejoin: round; }

.map-top { position: absolute; top: 31px; left: 31px; right: 30px; display: flex; justify-content: space-between; }
.map-types { display: flex; border-radius: 6px; background: #fff; box-shadow: 0 1px 8px rgba(0,0,0,.3); }
.map-type { height: 120px; padding: 0 70px; font-size: 53px; line-height: 64px; color: #565656; }
.map-type + .map-type { box-shadow: -2px 0 6px rgba(0,0,0,.15); }
.map-type-on { font-weight: 500; color: #000; }
.control { display: flex; align-items: center; justify-content: center; width: 120px; height: 120px; border-radius: 6px; background: #fff; box-shadow: 0 1px 8px rgba(0,0,0,.3); }
.map-side { position: absolute; right: 30px; bottom: 73px; display: flex; flex-direction: column; gap: 96px; }
.zoom { padding: 0 14px; border-radius: 6px; background: #fff; box-shadow: 0 1px 8px rgba(0,0,0,.3); }
.zoom-button { display: flex; align-items: center; justify-content: center; width: 92px; height: 122px; }
.zoom-button + .zoom-button { border-top: 4px solid #e6e6e6; }
.legal { position: absolute; right: 0; bottom: 0; display: flex; padding-right: 2px; font-size: 30px; line-height: 40px; background: rgba(245,245,245,.8); white-space: nowrap; }
.legal-item { padding: 0 17px 4px; color: #000; text-decoration: none; }
.legal-item + .legal-item { border-left: 1px solid #ddd; }

.sort { display: flex; gap: 25px; padding: 67px 0 12px; font-size: 47px; line-height: 56px; font-weight: 500; white-space: nowrap; }
.sort-option { color: #9ca3af; }
.sort-on { color: #000; text-decoration: underline; text-decoration-thickness: 4px; text-underline-offset: 5px; }
.arrow { width: 28px; height: 27px; fill: #000; vertical-align: 4px; }

.card { margin-bottom: 3px; padding: 4px 0 24px; background: #fff; box-shadow: 0 6px 8px rgba(0,0,0,.12); }
.card-head { display: flex; justify-content: space-between; align-items: center; height: 164px; }
.level { display: flex; align-items: center; gap: 14px; font-size: 47px; font-weight: 500; line-height: 56px; }
.bars { display: flex; gap: 9px; }
.bar { width: 12px; height: 36px; background: #c4c4c4; }
.bar-on { background: #9dc91e; }
.reading { display: flex; align-items: baseline; gap: 16px; font-size: 47px; line-height: 56px; font-weight: 500; }
.reading strong { font-size: 142px; line-height: 164px; font-weight: 700; color: #9dc91e; }
.card-time { display: flex; justify-content: space-between; padding-right: 72px; font-size: 35px; line-height: 40px; font-weight: 300; }
.card-place { display: flex; justify-content: space-between; align-items: center; margin-top: 16px; font-size: 35px; line-height: 48px; }
.address { display: flex; align-items: center; gap: 15px; padding-left: 2px; }
.pin { width: 18px; height: 25px; }
.more { width: 208px; height: 48px; border-radius: 20px; background: #fef9df; }
.cta { position: absolute; left: 98px; right: 96px; bottom: 48px; height: 167px; border: 2px solid #fffdf0; border-radius: 18px; background: #fbec94; box-shadow: 4px 12px 16px rgba(0,0,0,.28); font-size: 47px; font-weight: 500; }
```
